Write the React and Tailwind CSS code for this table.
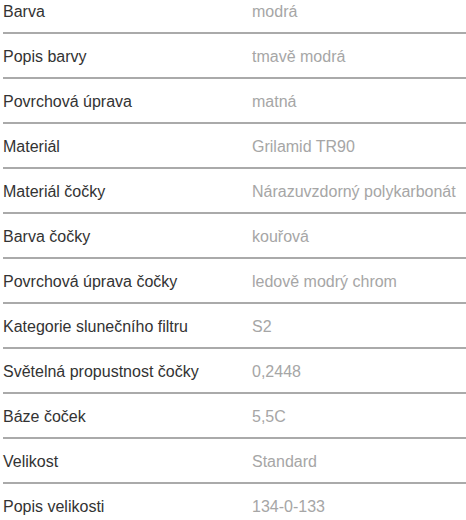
import React from "react";

const rows = [
  ["Barva", "modrá"],
  ["Popis barvy", "tmavě modrá"],
  ["Povrchová úprava", "matná"],
  ["Materiál", "Grilamid TR90"],
  ["Materiál čočky", "Nárazuvzdorný polykarbonát"],
  ["Barva čočky", "kouřová"],
  ["Povrchová úprava čočky", "ledově modrý chrom"],
  ["Kategorie slunečního filtru", "S2"],
  ["Světelná propustnost čočky", "0,2448"],
  ["Báze čoček", "5,5C"],
  ["Velikost", "Standard"],
  ["Popis velikosti", "134-0-133"],
];

export default function App() {
  return (
    <div className="w-[466px] h-[520px] overflow-hidden bg-white pl-[3px] font-['Liberation_Sans',Arial,sans-serif] text-[16px] leading-[24px]">
      {rows.map(([k, v], i) => (
        <div
          key={k}
          className={`flex border-b-2 border-[#aaaaaa] ${i === 0 ? "pt-0 pb-[8px]" : "pt-[11px] pb-[8px]"}`}
        >
          <div className="w-[249px] shrink-0 text-[#333333]">{k}</div>
          <div className="text-[#a6a6a6] whitespace-nowrap">{v}</div>
        </div>
      ))}
    </div>
  );
}
